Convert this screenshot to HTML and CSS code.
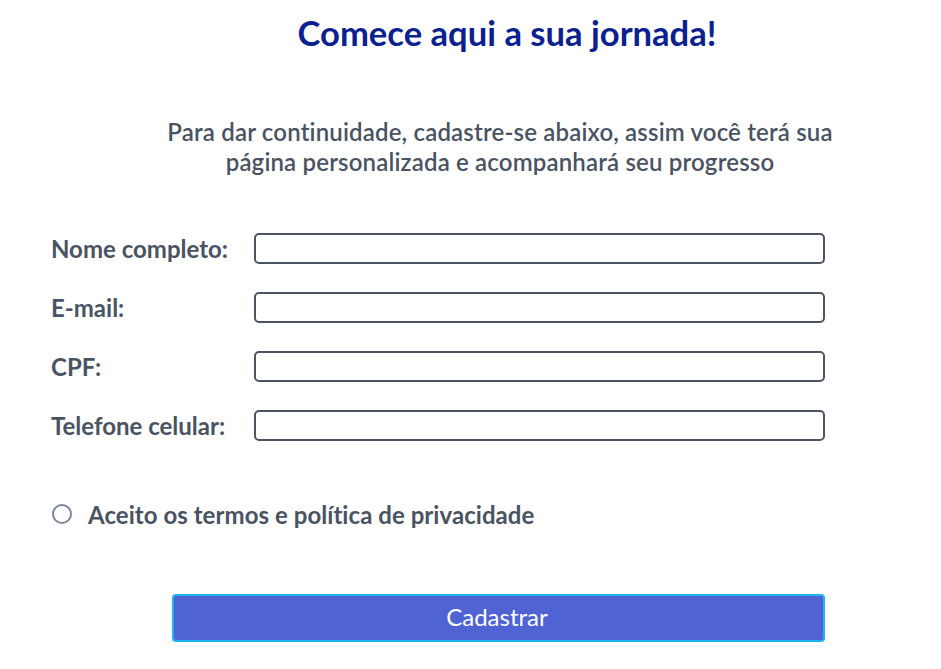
FILE: index.html
```html
<!DOCTYPE html>
<html lang="pt-BR">
<head>
<meta charset="utf-8">
<title>Cadastro</title>
<link rel="stylesheet" href="styles.css">
</head>
<body>
<main class="page">
  <header class="intro">
    <h1 class="title">Comece aqui a sua jornada!</h1>
    <p class="lead">Para dar continuidade, cadastre-se abaixo, assim você terá sua<br>página personalizada e acompanhará seu progresso</p>
  </header>
  <form class="form">
    <div class="fields">
      <label class="label" for="nome">Nome completo:</label>
      <input class="input" id="nome" type="text">
      <label class="label" for="email">E-mail:</label>
      <input class="input" id="email" type="email">
      <label class="label" for="cpf">CPF:</label>
      <input class="input" id="cpf" type="text">
      <label class="label" for="tel">Telefone celular:</label>
      <input class="input" id="tel" type="tel">
    </div>
    <label class="terms">
      <span class="radio"></span>
      <span class="terms-text">Aceito os termos e política de privacidade</span>
    </label>
    <button class="submit" type="button">Cadastrar</button>
  </form>
</main>
</body>
</html>
```

FILE: styles.css
```css
* { box-sizing: border-box; }
html, body { margin: 0; padding: 0; background: #ffffff; }
body {
  font-family: Lato, "Noto Sans", sans-serif;
  color: #4a5362;
}
.page {
  padding-left: 51px;
  width: 825px;
}
.intro {
  margin-left: 109px;
  width: 680px;
  text-align: center;
}
.title {
  margin: 13px 0 0;
  padding-left: 14px;
  font-size: 34.6px;
  line-height: 40px;
  font-weight: 700;
  color: #0c2190;
}
.lead {
  margin: 64px 0 0;
  font-size: 24px;
  line-height: 30px;
  font-weight: 600;
  letter-spacing: 0.17px;
  color: #4a5362;
  white-space: nowrap;
}
.form {
  margin-top: 56px;
}
.fields {
  display: grid;
  grid-template-columns: 203px 571px;
  row-gap: 28px;
  align-items: center;
}
.label {
  font-size: 24px;
  font-weight: 700;
  line-height: 31px;
  color: #4a5362;
  white-space: nowrap;
}
.input {
  height: 31px;
  width: 571px;
  border: 2px solid #4b5563;
  border-radius: 5px;
  background: #fff;
  font: inherit;
  padding: 0 8px;
  margin: 0;
}
.terms {
  margin-top: 58px;
  display: flex;
  align-items: center;
  gap: 16px;
  height: 30px;
}
.radio {
  width: 20px;
  height: 20px;
  margin-left: 1px;
  border: 2px solid #7a869a;
  border-radius: 50%;
  flex: none;
}
.terms-text {
  font-size: 24px;
  font-weight: 700;
  letter-spacing: 0.05px;
  color: #4a5362;
}
.submit {
  display: block;
  margin: 65px 0 0 121px;
  width: 653px;
  height: 48px;
  background: #4f63d3;
  border: 2px solid #1fb3f3;
  border-radius: 4px;
  color: #ffffff;
  font-family: Lato, "Noto Sans", sans-serif;
  font-size: 24px;
  font-weight: 400;
  padding: 0 3px 3px 0;
}
```
